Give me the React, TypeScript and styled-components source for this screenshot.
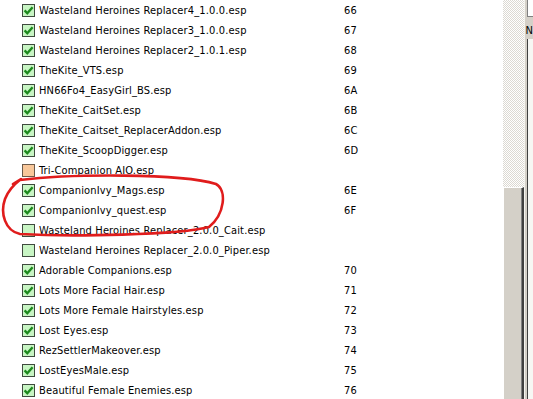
import React, {FC} from 'react';
import styled, {createGlobalStyle} from "styled-components";

type PluginType = {
  name: string
  index?: string
  state: 'checked' | 'empty' | 'missing'
}

const plugins: PluginType[] = [
  {name: 'Wasteland Heroines Replacer4_1.0.0.esp', index: '66', state: 'checked'},
  {name: 'Wasteland Heroines Replacer3_1.0.0.esp', index: '67', state: 'checked'},
  {name: 'Wasteland Heroines Replacer2_1.0.1.esp', index: '68', state: 'checked'},
  {name: 'TheKite_VTS.esp', index: '69', state: 'checked'},
  {name: 'HN66Fo4_EasyGirl_BS.esp', index: '6A', state: 'checked'},
  {name: 'TheKite_CaitSet.esp', index: '6B', state: 'checked'},
  {name: 'TheKite_Caitset_ReplacerAddon.esp', index: '6C', state: 'checked'},
  {name: 'TheKite_ScoopDigger.esp', index: '6D', state: 'checked'},
  {name: 'Tri-Companion AIO.esp', state: 'missing'},
  {name: 'CompanionIvy_Mags.esp', index: '6E', state: 'checked'},
  {name: 'CompanionIvy_quest.esp', index: '6F', state: 'checked'},
  {name: 'Wasteland Heroines Replacer_2.0.0_Cait.esp', state: 'empty'},
  {name: 'Wasteland Heroines Replacer_2.0.0_Piper.esp', state: 'empty'},
  {name: 'Adorable Companions.esp', index: '70', state: 'checked'},
  {name: 'Lots More Facial Hair.esp', index: '71', state: 'checked'},
  {name: 'Lots More Female Hairstyles.esp', index: '72', state: 'checked'},
  {name: 'Lost Eyes.esp', index: '73', state: 'checked'},
  {name: 'RezSettlerMakeover.esp', index: '74', state: 'checked'},
  {name: 'LostEyesMale.esp', index: '75', state: 'checked'},
  {name: 'Beautiful Female Enemies.esp', index: '76', state: 'checked'},
]

const Check: FC<{state: PluginType['state']}> = ({state}) => (
  <Box $state={state}>
    {state === 'checked' &&
      <svg width="11" height="11" viewBox="0 0 11 11">
        <path d="M1.6 5.4 L4.3 8.3 L9.6 2.2" fill="none" stroke="#1d8a1d" strokeWidth="2.4"/>
      </svg>}
  </Box>
)

export default function App() {
  return (
    <>
      <GlobalStyle/>
      <Frame>
        <ListPane>
          {plugins.map(p => (
            <Row key={p.name}>
              <NameCell>
                <Check state={p.state}/>
                <Name>{p.name}</Name>
              </NameCell>
              <Index>{p.index}</Index>
            </Row>
          ))}
          {/* hand-drawn marker around the two CompanionIvy rows */}
          <Scribble width="240" height="70" viewBox="0 170 240 70">
            <path
              d="M20 180 C70 174, 180 173, 216 184 C227 190, 225 214, 209 227 C180 235, 70 237, 20 234 C5 231, 0 213, 5 199 C8 191, 12 186, 21 179 L13 184"
              fill="none" stroke="#e01c1c" strokeWidth="2.6" strokeLinecap="round" strokeLinejoin="round"/>
          </Scribble>
        </ListPane>
        <ScrollTrack>
          <Thumb/>
        </ScrollTrack>
        <SidePanel>
          <SideTop/>
          <SideButton>N</SideButton>
          <SideBox/>
        </SidePanel>
      </Frame>
    </>
  );
}

const GlobalStyle = createGlobalStyle`
  body {
    margin: 0;
    background: #ffffff;
    overflow: hidden;
  }
`

const Frame = styled.div`
  display: flex;
  width: 533px;
  height: 399px;
  overflow: hidden;
  font-family: "DejaVu Sans Condensed", "DejaVu Sans", sans-serif;
  font-size: 11px;
  color: #000;
`

const ListPane = styled.div`
  position: relative;
  width: 505px;
  background: #fff;
`

const Row = styled.div`
  display: grid;
  grid-template-columns: 344px auto;
  align-items: center;
  height: 20px;
`

const NameCell = styled.div`
  display: flex;
  align-items: center;
  padding-left: 22px;
  white-space: nowrap;
`

const Box = styled.div<{$state: PluginType['state']}>`
  box-sizing: border-box;
  width: 13px;
  height: 13px;
  border: 1px solid ${p => p.$state === 'missing' ? '#6b5a4a' : '#3f4a3f'};
  background: ${p => p.$state === 'missing' ? '#f8c79a' : '#c8f5c4'};
  display: flex;
  align-items: center;
  justify-content: center;
  margin-top: 1px;
`

const Name = styled.span`
  margin-left: 4px;
  letter-spacing: 0.15px;
`

const Index = styled.span`
  letter-spacing: 0.15px;
`

const Scribble = styled.svg`
  position: absolute;
  left: 0;
  top: 170px;
  pointer-events: none;
`

const ScrollTrack = styled.div`
  width: 21px;
  display: flex;
  flex-direction: column;
  justify-content: flex-end;
  background-image: repeating-conic-gradient(#dcd9d2 0 25%, #ffffff 0 50%);
  background-size: 2px 2px;
`

const Thumb = styled.div`
  box-sizing: border-box;
  height: 212px;
  background: #d4d0c8;
  border-top: 1px solid #ffffff;
  border-left: 1px solid #ffffff;
  border-right: 2px solid #404040;
  box-shadow: inset -1px 0 0 #808080;
`

const SidePanel = styled.div`
  flex: 1;
  display: flex;
  flex-direction: column;
  background: #d4d0c8;
  border-left: 1px solid #f4f3ee;
`

const SideTop = styled.div`
  height: 16px;
  margin-left: 2px;
  background: #fff;
  border-left: 1px solid #808080;
  border-bottom: 1px solid #808080;
`

const SideButton = styled.div`
  height: 22px;
  padding-top: 8px;
  padding-left: 1px;
  overflow: hidden;
  font-size: 11px;
  line-height: 11px;
  box-sizing: border-box;
`

const SideBox = styled.div`
  flex: 1;
  margin-left: 2px;
  background: #f7f7f4;
  border-left: 1px solid #404040;
`
